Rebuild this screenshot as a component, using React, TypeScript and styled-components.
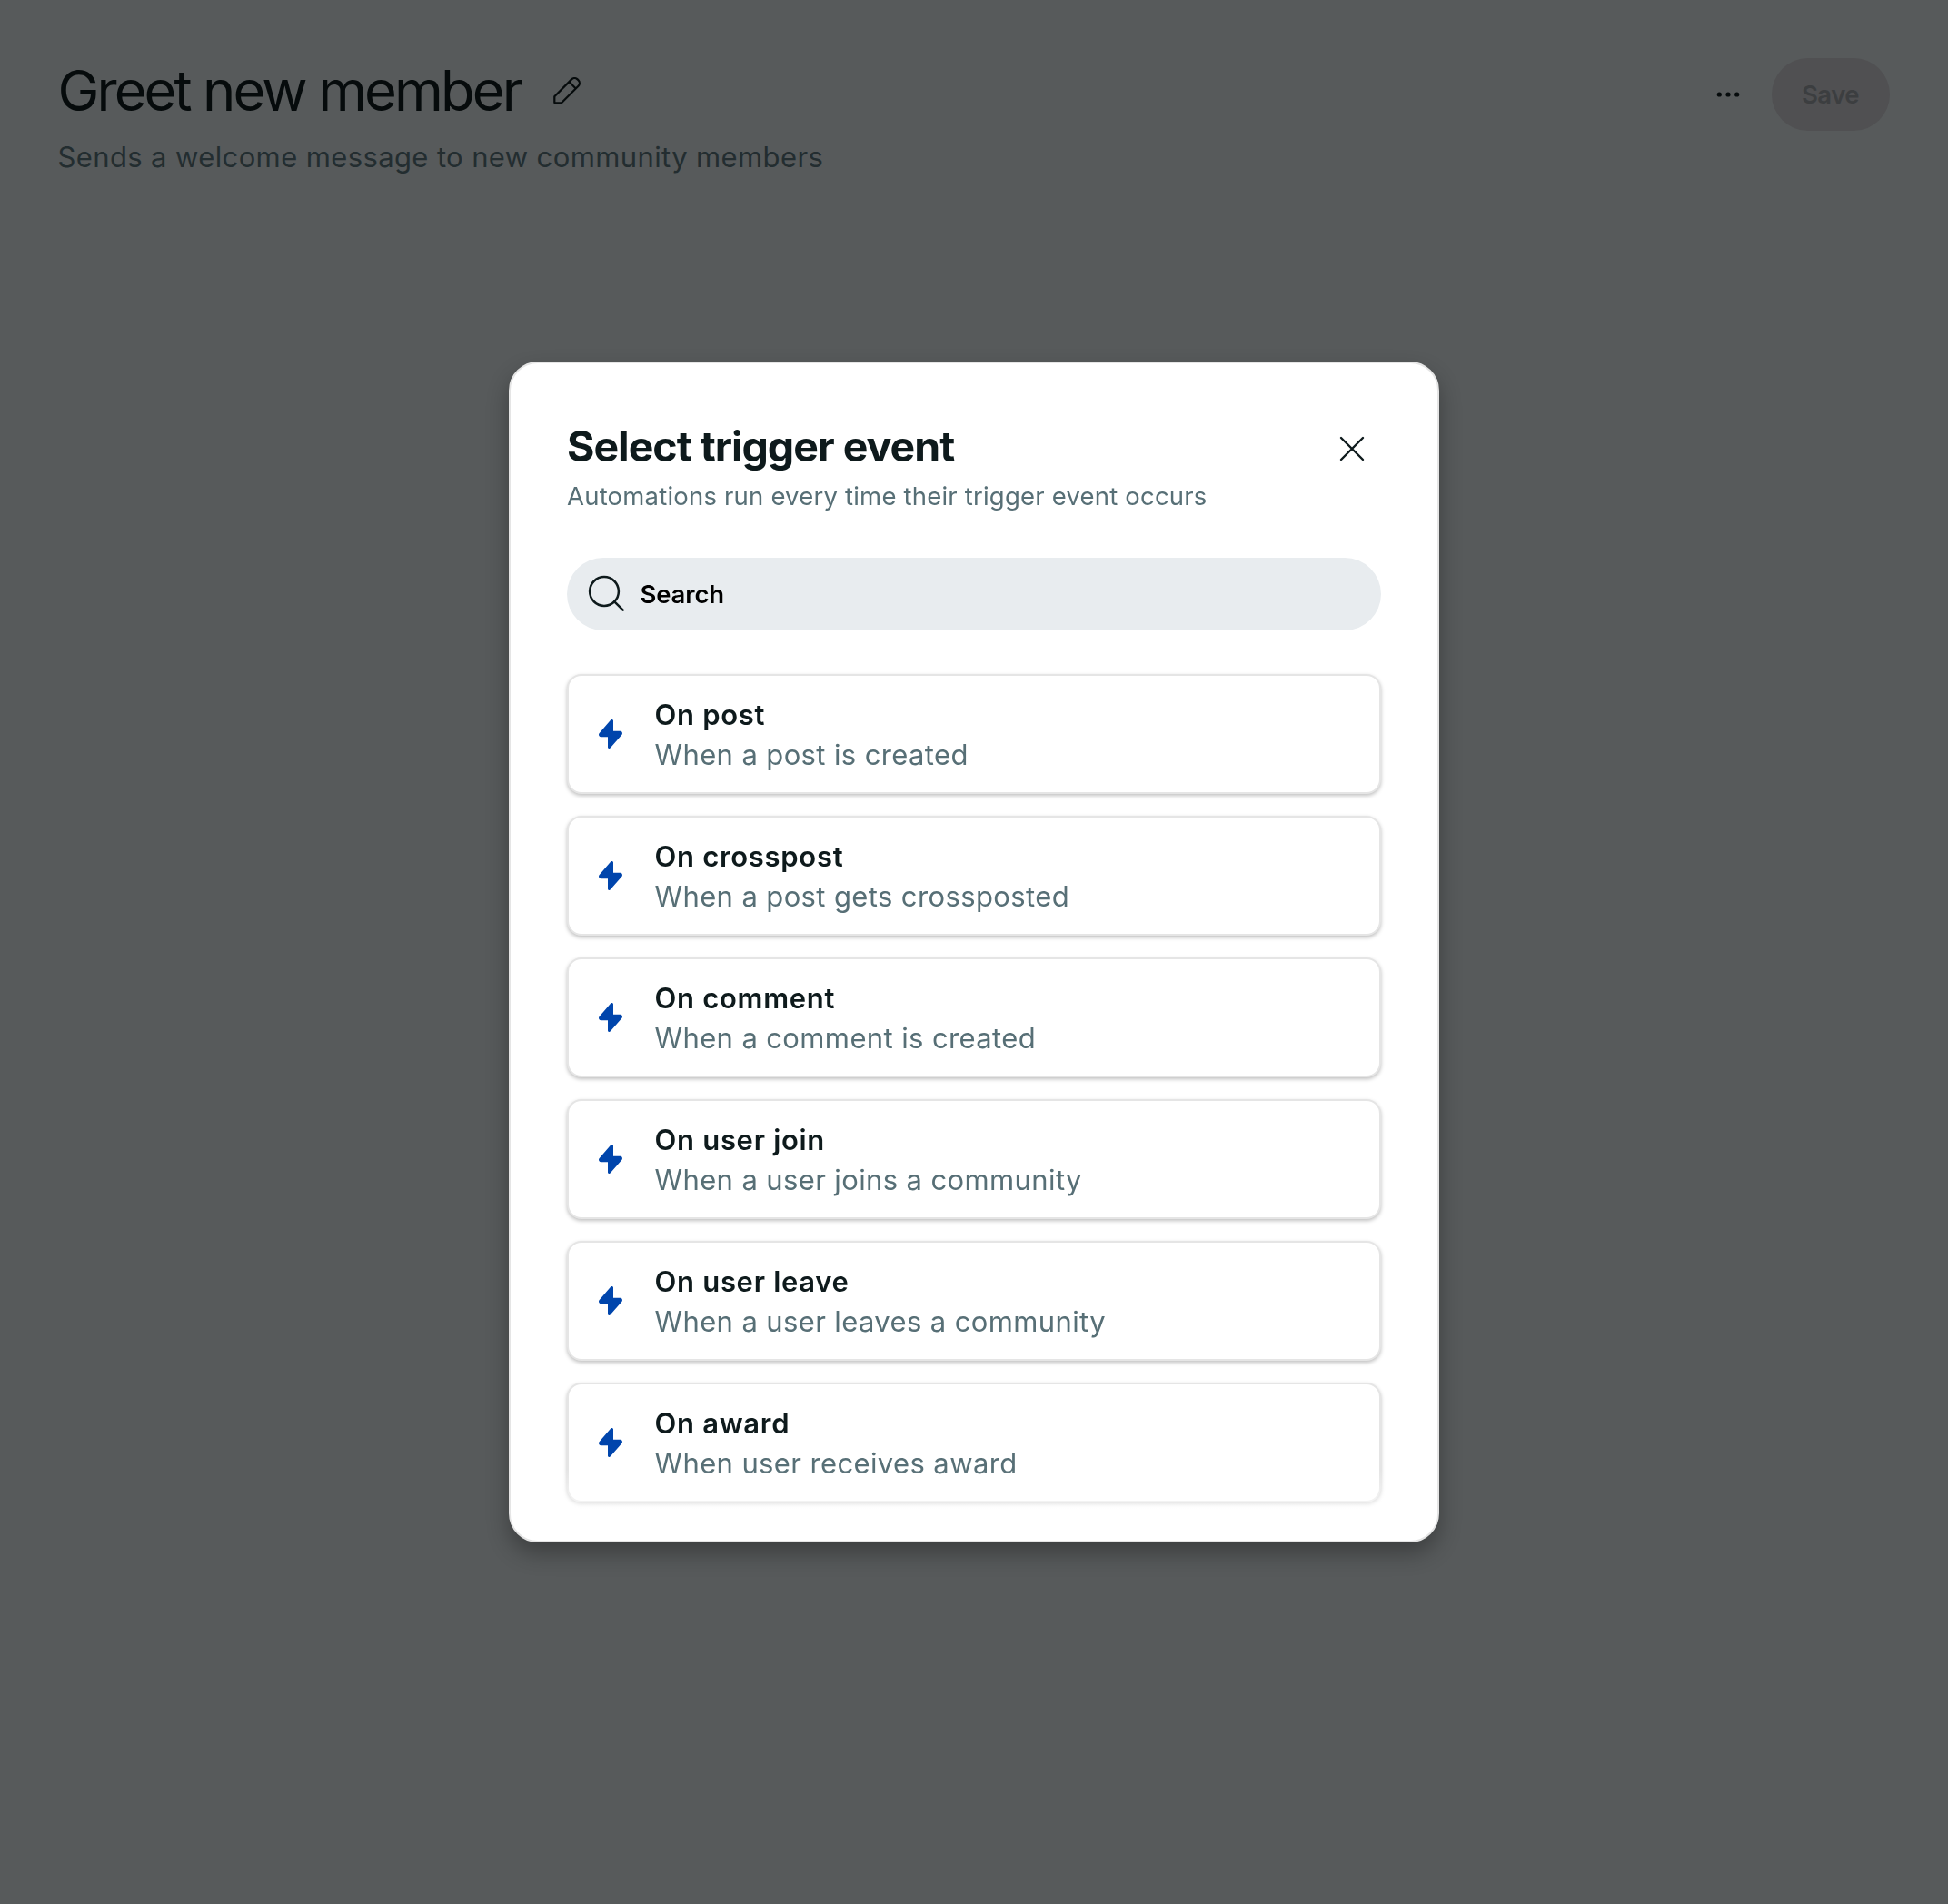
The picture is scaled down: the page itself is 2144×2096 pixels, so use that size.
import React from 'react';
import styled, { createGlobalStyle } from 'styled-components';

const GlobalStyle = createGlobalStyle`
  *, *::before, *::after { box-sizing: border-box; }
  body {
    margin: 0;
    background: #575a5b;
    font-family: Inter, 'Liberation Sans', sans-serif;
  }
  button { font-family: inherit; border: 0; padding: 0; background: none; cursor: pointer; }
`;

const Page = styled.div`
  min-height: 100vh;
  padding: 60px 64px 0 63.5px;
`;

const Header = styled.header`
  display: flex;
  justify-content: space-between;
  align-items: flex-start;
`;

const TitleRow = styled.div`
  display: flex;
  align-items: center;
`;

const PageTitle = styled.h1`
  margin: 0;
  font-size: 61.5px;
  font-weight: 400;
  line-height: 80px;
  letter-spacing: -2.92px;
  color: #060b0c;
`;

const EditButton = styled.button`
  display: flex;
  margin-left: 36px;
  color: #060b0c;
`;

const PageSubtitle = styled.p`
  margin: 9px 0 0;
  font-size: 31px;
  line-height: 48px;
  letter-spacing: 0.38px;
  color: #232d30;
`;

const HeaderActions = styled.div`
  display: flex;
  align-items: center;
  gap: 24px;
  padding-top: 4px;
`;

const MoreButton = styled.button`
  display: flex;
  align-items: center;
  justify-content: center;
  width: 48px;
  height: 48px;
  color: #060b0c;
`;

const SaveButton = styled.button`
  width: 130px;
  height: 80px;
  padding-right: 1px;
  border-radius: 40px;
  background: #505052;
  color: #3c3e40;
  font-size: 27.5px;
  font-weight: 600;
  letter-spacing: -0.5px;
`;

const Overlay = styled.div`
  position: fixed;
  inset: 0;
  display: flex;
  align-items: center;
  justify-content: center;
`;

const Dialog = styled.section`
  position: relative;
  display: flex;
  flex-direction: column;
  width: 1024px;
  height: 1300px;
  padding: 63px 62px 0;
  overflow: hidden;
  border: 2px solid #e5e5e5;
  border-radius: 32px;
  background: #fff;
  box-shadow: 0 12px 24px rgba(0, 0, 0, 0.3);
`;

const DialogHeader = styled.div`
  display: flex;
  justify-content: space-between;
  align-items: flex-start;
`;

const DialogTitle = styled.h2`
  margin: 0;
  font-size: 46.5px;
  font-weight: 700;
  line-height: 56px;
  letter-spacing: -1.03px;
  color: #0e1a1c;
`;

const DialogSubtitle = styled.p`
  margin: 7px 0 0;
  font-size: 27.5px;
  line-height: 40px;
  letter-spacing: 0.2px;
  color: #576f76;
`;

const CloseButton = styled.button`
  display: flex;
  align-items: center;
  justify-content: center;
  width: 64px;
  height: 62px;
  color: #0e1a1c;
`;

const SearchField = styled.label`
  display: flex;
  align-items: center;
  gap: 15.5px;
  height: 80px;
  margin-top: 48px;
  padding-left: 21px;
  border-radius: 40px;
  background: #e8ecef;
  color: #0e1a1c;
`;

const SearchText = styled.span`
  font-size: 27.5px;
  font-weight: 600;
  line-height: 40px;
  letter-spacing: -0.15px;
  color: #000;
`;

const TriggerList = styled.ul`
  display: flex;
  flex-direction: column;
  gap: 24px;
  margin: 48px 0 0;
  padding: 0;
  list-style: none;
`;

const TriggerCard = styled.li`
  display: flex;
  align-items: center;
  gap: 35.5px;
  height: 132px;
  padding-left: 33px;
  border: 2px solid #e5e5e5;
  border-radius: 16px;
  background: #fff;
  box-shadow: 0 2px 4px rgba(0, 0, 0, 0.25);
`;

const TriggerText = styled.div`
  padding-top: 2px;
  font-size: 31px;
  line-height: 44px;
`;

const TriggerName = styled.div`
  font-weight: 600;
  letter-spacing: 0.7px;
  color: #0e1a1c;
`;

const TriggerDescription = styled.div`
  letter-spacing: 0.38px;
  color: #576f76;
`;

const BottomFade = styled.div`
  position: absolute;
  right: 0;
  bottom: 14px;
  left: 0;
  height: 64px;
  background: linear-gradient(rgba(255, 255, 255, 0), #fff);
  pointer-events: none;
`;

const PencilIcon = () => (
  <svg width="30" height="30" viewBox="0 0 30 30" fill="none" stroke="currentColor" strokeWidth="2.2" strokeLinejoin="round">
    <path d="M1.300 21.200 20.100 2.400a4.600 4.600 0 0 1 6.500 0l.9.9a4.600 4.600 0 0 1 0 6.500L9 28.300H1.800a.5.5 0 0 1-.5-.5Z" />
    <path d="m17.600 5.300 7.200 7.200" />
  </svg>
);

const DotsIcon = () => (
  <svg width="26" height="6" viewBox="0 0 26 6" fill="currentColor">
    <circle cx="3.3" cy="3" r="2.6" />
    <circle cx="13" cy="3" r="2.6" />
    <circle cx="22.7" cy="3" r="2.6" />
  </svg>
);

const CloseIcon = () => (
  <svg width="28" height="28" viewBox="0 0 28 28" stroke="currentColor" strokeWidth="2.4" strokeLinecap="round">
    <path d="m2 2 24 24M26 2 2 26" />
  </svg>
);

const SearchIcon = () => (
  <svg width="44" height="44" viewBox="0 0 44 44" fill="none" stroke="currentColor" strokeWidth="2.5" strokeLinecap="round">
    <circle cx="20" cy="19" r="15.9" />
    <path d="m31.3 30.3 9.4 9.4" />
  </svg>
);

const BoltIcon = () => (
  <svg width="26" height="32" viewBox="0 0 26 32" fill="#0045ac">
    <path d="M13 .7C13.900-.4 16 0 16 1.600V12.800h7.600c2.200 0 3.100 2.600 1.700 4.300L12.800 31.300c-.9 1.100-2.800.6-2.800-.9V19.300H2.400c-2.200 0-3.200-2.600-1.700-4.300Z" />
  </svg>
);

const triggers = [
  { name: 'On post', description: 'When a post is created' },
  { name: 'On crosspost', description: 'When a post gets crossposted' },
  { name: 'On comment', description: 'When a comment is created' },
  { name: 'On user join', description: 'When a user joins a community' },
  { name: 'On user leave', description: 'When a user leaves a community' },
  { name: 'On award', description: 'When user receives award' },
];

export default function App() {
  return (
    <>
      <GlobalStyle />
      <Page>
        <Header>
          <div>
            <TitleRow>
              <PageTitle>Greet new member</PageTitle>
              <EditButton aria-label="Edit name">
                <PencilIcon />
              </EditButton>
            </TitleRow>
            <PageSubtitle>Sends a welcome message to new community members</PageSubtitle>
          </div>
          <HeaderActions>
            <MoreButton aria-label="More options">
              <DotsIcon />
            </MoreButton>
            <SaveButton disabled>Save</SaveButton>
          </HeaderActions>
        </Header>
      </Page>
      <Overlay>
        <Dialog role="dialog" aria-label="Select trigger event">
          <DialogHeader>
            <div>
              <DialogTitle>Select trigger event</DialogTitle>
              <DialogSubtitle>Automations run every time their trigger event occurs</DialogSubtitle>
            </div>
            <CloseButton aria-label="Close">
              <CloseIcon />
            </CloseButton>
          </DialogHeader>
          <SearchField>
            <SearchIcon />
            <SearchText>Search</SearchText>
          </SearchField>
          <TriggerList>
            {triggers.map((trigger) => (
              <TriggerCard key={trigger.name}>
                <BoltIcon />
                <TriggerText>
                  <TriggerName>{trigger.name}</TriggerName>
                  <TriggerDescription>{trigger.description}</TriggerDescription>
                </TriggerText>
              </TriggerCard>
            ))}
          </TriggerList>
          <BottomFade />
        </Dialog>
      </Overlay>
    </>
  );
}
